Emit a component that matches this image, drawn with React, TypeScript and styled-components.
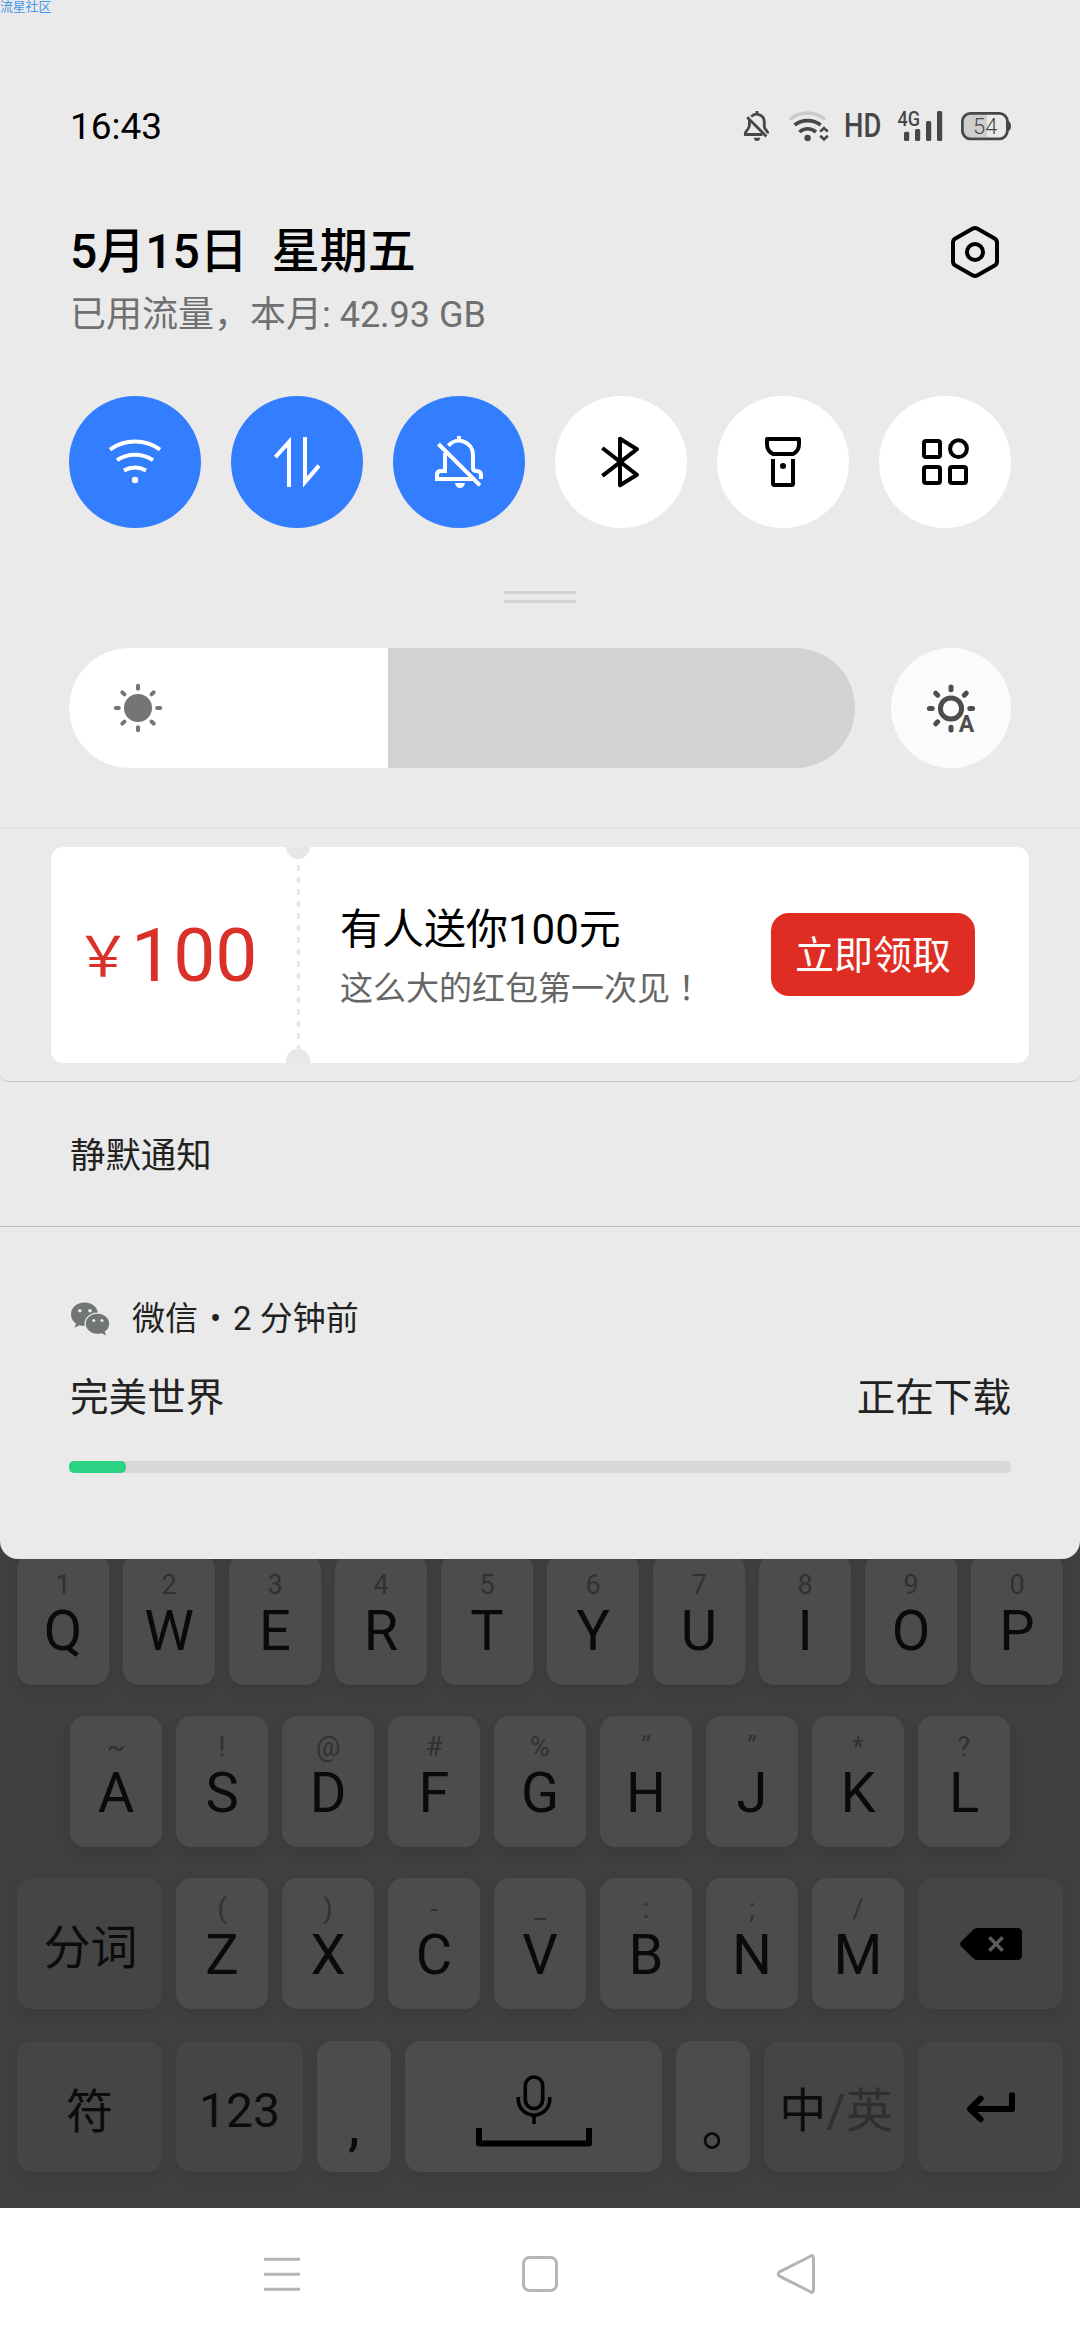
import React from "react";
import styled, { createGlobalStyle } from "styled-components";

const GlobalStyle = createGlobalStyle`
  html, body { margin: 0; padding: 0; background: #3f3f3d; }
  * { box-sizing: border-box; }
  svg { display: block; flex: none; overflow: visible; }
`;

const Screen = styled.main`
  width: 1080px;
  height: 2340px;
  display: flex;
  flex-direction: column;
  background: #3f3f3d;
  overflow: hidden;
  position: relative;
  font-family: Roboto, "Noto Sans CJK SC", sans-serif;
  color: #000;
  white-space: pre;
`;

const Watermark = styled.span`
  position: absolute;
  z-index: 2;
  left: 0;
  top: 0;
  font-size: 12.8px;
  line-height: 13px;
  color: #4698e8;
`;

const Shade = styled.section`
  position: relative;
  z-index: 1;
  height: 1559px;
  flex: none;
  background: #eaeaea;
  border-radius: 0 0 18px 18px;
  display: flex;
  flex-direction: column;
`;

const StatusBar = styled.header`
  margin-top: 96px;
  height: 60px;
  padding: 0 69px 0 70px;
  display: flex;
  align-items: center;
  justify-content: space-between;
`;

const Clock = styled.time`
  padding-top: 1px;
  font-size: 37px;
  line-height: 60px;
`;

const StatusIcons = styled.div`
  display: flex;
  align-items: center;
  color: #474747;
`;

const HdLabel = styled.span`
  width: 36px;
  margin: 0 18px 0 15px;
  font-size: 33px;
  font-weight: 500;
  line-height: 60px;
  transform: scaleX(0.83);
  transform-origin: 0 50%;
`;

const Header = styled.div`
  margin-top: 66px;
  padding: 0 75px 0 70px;
  display: flex;
  justify-content: space-between;
  align-items: flex-start;
`;

const DateText = styled.div`
  font-size: 48px;
  line-height: 60px;
  font-weight: 500;
`;

const DataUsage = styled.div`
  margin-top: 9px;
  font-size: 36px;
  line-height: 48px;
  color: #707070;
`;

const Tiles = styled.div`
  margin: 57px 69px 0;
  display: flex;
  gap: 30px;
`;

const Tile = styled.div<{ $on?: boolean }>`
  width: 132px;
  height: 132px;
  border-radius: 50%;
  display: grid;
  place-items: center;
  background: ${(p) => (p.$on ? "#337dff" : "#fff")};
  color: ${(p) => (p.$on ? "#fff" : "#000")};
`;

const DragHandle = styled.div`
  width: 72px;
  height: 12px;
  margin: 63px auto 0 504px;
  border-top: 3px solid #d3d3d3;
  border-bottom: 3px solid #d3d3d3;
`;

const BrightnessRow = styled.div`
  margin: 45px 69px 0;
  display: flex;
  justify-content: space-between;
`;

const BrightnessTrack = styled.div`
  width: 786px;
  height: 120px;
  border-radius: 60px;
  overflow: hidden;
  background: #d2d2d2;
`;

const BrightnessLevel = styled.div`
  width: 319px;
  height: 120px;
  padding-left: 39px;
  display: flex;
  align-items: center;
  background: #fff;
  color: #757575;
`;

const AutoBrightness = styled.div`
  width: 120px;
  height: 120px;
  border-radius: 50%;
  display: grid;
  place-items: center;
  background: #fbfbfb;
  color: #4d4d4d;
`;

const Promo = styled.section`
  margin-top: 59px;
  padding: 18px 51px;
  border-top: 2px solid #e1e1e1;
`;

const PromoEdge = styled.div`
  height: 12px;
  margin-top: -11px;
  border-bottom: 1px solid #c2c2c2;
  border-radius: 0 0 8px 8px;
`;

const Coupon = styled.div`
  height: 216px;
  border-radius: 12px;
  overflow: hidden;
  background: #fff;
  display: flex;
  align-items: center;
`;

const Amount = styled.div`
  width: 235px;
  padding: 7px 0 0 24px;
  display: flex;
  align-items: baseline;
  color: #d93028;
  font-size: 75px;
  line-height: 90px;
`;

const Currency = styled.span`
  position: relative;
  top: -5px;
  font-size: 56px;
  line-height: 90px;
`;

const Perforation = styled.div`
  width: 24px;
  height: 216px;
  display: flex;
  flex-direction: column;
  justify-content: space-between;
  align-items: center;
`;

const Notch = styled.i<{ $bottom?: boolean }>`
  width: 24px;
  height: ${(p) => (p.$bottom ? 14 : 12)}px;
  background: #e7e7e7;
  border-radius: ${(p) => (p.$bottom ? "12px 12px 0 0" : "0 0 12px 12px")};
`;

const Dashes = styled.i`
  width: 3px;
  flex: 1;
  margin-top: 6px;
  background: repeating-linear-gradient(#e6e6e6 0 6px, transparent 6px 12px);
`;

const CouponText = styled.div`
  flex: 1;
  padding: 5px 0 0 30px;
`;

const CouponTitle = styled.div`
  font-size: 42px;
  line-height: 60px;
`;

const CouponNote = styled.div`
  font-size: 33px;
  line-height: 52px;
  color: #666;
`;

const CenteredMark = styled.span`
  font-family: "Noto Sans CJK JP", sans-serif;
`;

const ClaimButton = styled.button`
  width: 204px;
  height: 83px;
  margin: -1px 54px 0 0;
  padding: 3px 0 0;
  border: 0;
  border-radius: 18px;
  background: #e02d24;
  color: #fff;
  font: inherit;
  font-size: 39px;
  line-height: 80px;
`;

const SilentHeading = styled.h2`
  margin: 0;
  height: 145px;
  padding: 5px 0 0 70px;
  border-bottom: 1px solid #bdbdbd;
  font-size: 35.4px;
  font-weight: 400;
  line-height: 139px;
  color: #222;
`;

const Notification = styled.article`
  padding: 70px 69px 0;
  color: #222;
`;

const AppLine = styled.div`
  height: 44px;
  padding-left: 1px;
  display: flex;
  align-items: center;
  font-size: 33px;
  line-height: 44px;
`;

const AppName = styled.span`
  margin-left: 22px;
`;

const Bullet = styled.span`
  width: 35px;
  text-align: center;
`;

const DownloadLine = styled.div`
  margin-top: 29px;
  padding: 0 0 0 1px;
  display: flex;
  justify-content: space-between;
  font-size: 38.6px;
  line-height: 56px;
`;

const ProgressTrack = styled.div`
  margin-top: 35px;
  height: 12px;
  border-radius: 5px;
  background: #d8d8d8;
`;

const ProgressBar = styled.div`
  width: 57px;
  height: 12px;
  border-radius: 5px;
  background: #2bd283;
`;

const Keyboard = styled.section`
  margin-top: -20px;
  height: 669px;
  flex: none;
  padding-top: 15px;
  display: flex;
  flex-direction: column;
  gap: 31px;
`;

const KeyRow = styled.div<{ $inset?: number; $nudge?: number }>`
  display: flex;
  gap: 14px;
  margin-top: ${(p) => p.$nudge ?? 0}px;
  padding: 0 ${(p) => p.$inset ?? 17}px;
`;

const Key = styled.div<{ $w?: number; $fn?: boolean }>`
  width: ${(p) => p.$w ?? 92}px;
  height: 131px;
  flex: none;
  border-radius: 15px;
  background: ${(p) => (p.$fn ? "#454545" : "#4c4c4c")};
  box-shadow: 0 6px 8px rgba(45, 45, 55, 0.2);
  display: flex;
  flex-direction: column;
  align-items: center;
`;

const Hint = styled.span`
  margin-top: 16px;
  font-size: 27px;
  line-height: 30px;
  color: #313131;
`;

const Letter = styled.span`
  margin-top: 1px;
  font-size: 56px;
  line-height: 60px;
  color: #0a0a0a;
`;

const FnLabel = styled.span<{ $size?: number; $top?: number; $left?: number }>`
  font-size: ${(p) => p.$size ?? 47}px;
  line-height: 131px;
  padding-top: ${(p) => p.$top ?? 4}px;
  padding-left: ${(p) => p.$left ?? 0}px;
  height: 131px;
  color: #0c0c0c;
`;

const Faded = styled.span`
  color: #2f2f2f;
`;

const FullStop = styled.span`
  padding-left: 31px;
  font-family: "Noto Sans CJK SC", sans-serif;
  font-size: 54px;
  line-height: 60px;
  margin-top: 52px;
  color: #0a0a0a;
`;

const Comma = styled.span`
  font-size: 60px;
  line-height: 60px;
  margin-top: 53px;
  color: #0a0a0a;
`;

const NavBar = styled.nav`
  height: 132px;
  flex: none;
  padding: 0 236px;
  display: flex;
  align-items: center;
  justify-content: space-between;
  background: #fff;
  color: #b5b5b5;
`;

const Glyph = ({ size = 66, w = 4, children }: { size?: number; w?: number; children: React.ReactNode }) => (
  <svg
    width={size}
    height={size}
    viewBox={`${-size / 2} ${-size / 2} ${size} ${size}`}
    fill="none"
    stroke="currentColor"
    strokeWidth={w}
  >
    {children}
  </svg>
);

const StatusMuteIcon = () => (
  <svg width="26" height="30" viewBox="0 0 26 30" fill="none" stroke="currentColor" strokeWidth="2.8">
    <path d="M13 0V3M7.2 5.6A7.6 7.6 0 0 1 20.3 10.5V15.5Q20.3 17.6 22.6 19.8Q23.8 21 23.8 22.6" />
    <path d="M5.4 8.8V14.5Q5.2 17 3 19.2Q1.3 20.8 1.3 23.5H18.5" />
    <path d="M3.2 6.2L22.4 25.4" />
    <path d="M9.7 26.8H16.3Q15.6 30 13 30Q10.4 30 9.7 26.8Z" fill="currentColor" stroke="none" />
  </svg>
);

const StatusWifiIcon = () => (
  <svg width="40" height="30" viewBox="0 0 40 30" fill="none" stroke="currentColor" strokeWidth="3.6">
    <path d="M1 8.5Q8.5 2 18.5 2T36 8.5" stroke="#cbcbcb" />
    <path d="M5.6 14Q11 9.6 18.6 9.6T31.6 14" />
    <path d="M10.4 21Q14 17.8 18.6 17.8T27 21" />
    <circle cx="18.6" cy="27" r="3.2" fill="currentColor" stroke="none" />
    <path d="M31.2 20.6L35 17L38.8 20.6M31.2 24.8L35 28.4L38.8 24.8" strokeWidth="2.6" />
  </svg>
);

const SignalIcon = () => (
  <svg width="45" height="30" viewBox="0 0 45 30" fill="currentColor">
    <text x="-0.5" y="15" fontSize="20" fontWeight="500" fontFamily="Roboto, sans-serif" textLength="22.5" lengthAdjust="spacingAndGlyphs">4G</text>
    <rect x="6" y="20.7" width="5.2" height="9.3" rx="1.5" />
    <rect x="17" y="18" width="5.2" height="12" rx="1.5" />
    <rect x="28" y="10" width="5.2" height="20" rx="1.5" />
    <rect x="39" y="0" width="5.2" height="30" rx="1.5" />
  </svg>
);

const BatteryBox = styled.div`
  margin-left: 18px;
`;

const BatteryIcon = () => (
  <svg width="50" height="30" viewBox="0 0 50 30">
    <path d="M9 3H26V26H9Q3 26 3 20V9Q3 3 9 3Z" fill="#cecece" />
    <rect x="1.4" y="2.4" width="45" height="25.4" rx="8" fill="none" stroke="currentColor" strokeWidth="2.8" />
    <path d="M47 9.5Q50 11 50 15T47 20.5Z" fill="currentColor" />
    <text x="24.2" y="22.6" fontSize="22" fontWeight="300" textAnchor="middle" fill="currentColor" fontFamily="Roboto, sans-serif">54</text>
  </svg>
);

const SettingsIcon = () => (
  <Glyph size={60}>
    <path d="M-2.6 -23.2Q0 -24.6 2.6 -23.2L19.6 -13.6Q22 -12.2 22 -9.4V9.4Q22 12.2 19.6 13.6L2.6 23.2Q0 24.6 -2.6 23.2L-19.6 13.6Q-22 12.2 -22 9.4V-9.4Q-22 -12.2 -19.6 -13.6Z" />
    <circle r="8" />
  </Glyph>
);

const WifiIcon = () => (
  <Glyph>
    <path d="M-25 -12.4A43 43 0 0 1 25 -12.4M-18 -1.8A32.7 32.7 0 0 1 18 -1.8M-11 8.6A23 23 0 0 1 11 8.6" />
    <circle cy="18" r="3.2" fill="currentColor" stroke="none" />
  </Glyph>
);

const DataIcon = () => (
  <Glyph>
    <path d="M-8 25V-20L-21.6 -4.8M8 -25V20L22 3.6" strokeMiterlimit="10" />
  </Glyph>
);

const MuteIcon = () => (
  <Glyph>
    <path d="M0 -26V-21M-10.6 -16.4A14 14 0 0 1 14 -7.5V5.5Q14 9 17.5 9Q22 9 22 13V17" />
    <path d="M-14 -9V9H-18.4Q-22 9 -22 12.6V17H15" />
    <path d="M-20.6 -18L21 23.4" />
    <path d="M-4 21H6Q5 26 1 26T-4 21Z" fill="currentColor" stroke="none" />
  </Glyph>
);

const BluetoothIcon = () => (
  <Glyph>
    <path d="M-18.6 -14L16 12.8L-1 23.3V-23.3L16 -12.8L-18.6 13.8" strokeLinejoin="round" />
  </Glyph>
);

const TorchIcon = () => (
  <Glyph>
    <path d="M-16 -23H16V-18Q16 -11 10 -8H-10Q-16 -11 -16 -18Z" strokeLinejoin="round" />
    <path d="M-10 -3V21.5Q-10 23 -8.5 23H8.5Q10 23 10 21.5V-3" />
    <circle cy="4" r="3" fill="currentColor" stroke="none" />
  </Glyph>
);

const MoreIcon = () => (
  <Glyph>
    <rect x="-21" y="-21" width="16" height="16" rx="2" />
    <circle cx="13.5" cy="-13.3" r="8.4" />
    <rect x="-21" y="5" width="16" height="16" rx="2" />
    <rect x="5" y="5" width="16" height="16" rx="2" />
  </Glyph>
);

const rays = [0, 45, 90, 135, 180, 225, 270, 315];

const SunIcon = () => (
  <Glyph size={60}>
    <circle r="14" fill="currentColor" stroke="none" />
    {rays.map((a) => (
      <path key={a} d="M0 -19.2V-22.2" strokeLinecap="round" transform={`rotate(${a})`} />
    ))}
  </Glyph>
);

const AutoSunIcon = () => (
  <Glyph size={60}>
    <circle cy="0.5" r="10.6" strokeWidth="5" />
    {rays
      .filter((a) => a !== 135)
      .map((a) => (
        <path key={a} d="M0 -18.8V-21.6" strokeLinecap="round" strokeWidth="5" transform={`translate(0 .5) rotate(${a})`} />
      ))}
    <text x="7.8" y="24" fontSize="23" fontWeight="700" fill="currentColor" stroke="#fbfbfb" strokeWidth="3" paintOrder="stroke" fontFamily="Roboto, sans-serif">
      A
    </text>
  </Glyph>
);

const WechatIcon = () => (
  <svg width="40" height="34" viewBox="0 0 40 34">
    <path d="M14.5 0.5C6.6 0.5 1 5.8 1 12.4c0 3.8 1.9 6.9 5 9.1L4.7 25.8l4.9-2.6c1.6.5 3.2.8 4.9.8 8 0 13.5-5 13.5-11.7S22.5.5 14.5.5Z" fill="#727576" />
    <ellipse cx="27.5" cy="21.8" rx="13" ry="11.4" fill="#eaeaea" />
    <path d="M27.5 11.8c-6.8 0-11.7 4.5-11.7 10s4.9 10 11.7 10c1.5 0 2.9-.2 4.2-.6l4.3 2.3-1.2-3.9c2.7-1.9 4.4-4.6 4.4-7.8 0-5.500-4.900-10-11.700-10Z" fill="#727576" />
    <g fill="#eaeaea">
      <circle cx="9.8" cy="8.8" r="1.8" />
      <circle cx="20" cy="8.8" r="1.8" />
      <circle cx="23.8" cy="18.4" r="1.5" />
      <circle cx="32" cy="18.4" r="1.5" />
    </g>
  </svg>
);

const KeyIcon = styled.div<{ $down?: number }>`
  height: 131px;
  padding-top: ${(p) => (p.$down ?? 0) * 2}px;
  display: flex;
  align-items: center;
  color: #000;
`;

const BackspaceIcon = () => (
  <svg width="62" height="32" viewBox="0 0 62 32">
    <path d="M13.5 1.6Q15.2 0 17.6 0H57Q62 0 62 5V27Q62 32 57 32H17.6Q15.2 32 13.5 30.4L1 18.2Q-1 16 1 13.8Z" fill="#000" />
    <path d="M29.3 9.3L42.7 22.7M42.7 9.3L29.3 22.7" stroke="#5c5c5c" strokeWidth="3.4" />
  </svg>
);

const EnterIcon = () => (
  <svg width="48" height="30" viewBox="0 0 48 30" fill="none" stroke="currentColor" strokeWidth="6" strokeLinejoin="round">
    <path d="M45 1V16H5" />
    <path d="M43.5 1H46.500" strokeWidth="3" strokeLinecap="round" />
    <path d="M13.600 5.600L3 16L13.600 26.200" strokeLinecap="round" />
  </svg>
);

const SpaceIcon = () => (
  <svg width="116" height="72" viewBox="0 0 116 72" fill="none" stroke="currentColor" strokeWidth="3.6">
    <rect x="49.3" y="2" width="17.4" height="31.5" rx="8.7" />
    <path d="M42.3 22V24.5A15.7 15.7 0 0 0 73.7 24.5V22M58 40V49" />
    <path d="M3 53V68.5H113V53" strokeWidth="6" strokeLinejoin="round" />
  </svg>
);

const topRow = ["1Q", "2W", "3E", "4R", "5T", "6Y", "7U", "8I", "9O", "0P"];
const homeRow = ["~A", "!S", "@D", "#F", "%G", "“H", "”J", "*K", "?L"];
const lowRow = ["(Z", ")X", "-C", "_V", ":B", ";N", "/M"];

const LetterKey = ({ pair }: { pair: string }) => (
  <Key>
    <Hint>{pair[0]}</Hint>
    <Letter>{pair[1]}</Letter>
  </Key>
);

export default function App() {
  return (
    <Screen>
      <GlobalStyle />
      <Watermark>流星社区</Watermark>
      <Shade>
        <StatusBar>
          <Clock>16:43</Clock>
          <StatusIcons>
            <StatusMuteIcon />
            <svg width="19" height="1" />
            <StatusWifiIcon />
            <HdLabel>HD</HdLabel>
            <SignalIcon />
            <BatteryBox>
              <BatteryIcon />
            </BatteryBox>
          </StatusIcons>
        </StatusBar>
        <Header>
          <div>
            <DateText>5月15日{"  "}星期五</DateText>
            <DataUsage>已用流量，本月: 42.93 GB</DataUsage>
          </div>
          <SettingsIcon />
        </Header>
        <Tiles>
          <Tile $on><WifiIcon /></Tile>
          <Tile $on><DataIcon /></Tile>
          <Tile $on><MuteIcon /></Tile>
          <Tile><BluetoothIcon /></Tile>
          <Tile><TorchIcon /></Tile>
          <Tile><MoreIcon /></Tile>
        </Tiles>
        <DragHandle />
        <BrightnessRow>
          <BrightnessTrack>
            <BrightnessLevel>
              <SunIcon />
            </BrightnessLevel>
          </BrightnessTrack>
          <AutoBrightness>
            <AutoSunIcon />
          </AutoBrightness>
        </BrightnessRow>
        <Promo>
          <Coupon>
            <Amount>
              <Currency>￥</Currency>100
            </Amount>
            <Perforation>
              <Notch />
              <Dashes />
              <Notch $bottom />
            </Perforation>
            <CouponText>
              <CouponTitle>有人送你100元</CouponTitle>
              <CouponNote>
                这么大的红包第一次见<CenteredMark lang="ja">！</CenteredMark>
              </CouponNote>
            </CouponText>
            <ClaimButton>立即领取</ClaimButton>
          </Coupon>
        </Promo>
        <PromoEdge />
        <SilentHeading>静默通知</SilentHeading>
        <Notification>
          <AppLine>
            <WechatIcon />
            <AppName>微信</AppName>
            <Bullet>•</Bullet>
            <span>2 分钟前</span>
          </AppLine>
          <DownloadLine>
            <span>完美世界</span>
            <span>正在下载</span>
          </DownloadLine>
          <ProgressTrack>
            <ProgressBar />
          </ProgressTrack>
        </Notification>
      </Shade>
      <Keyboard>
        <KeyRow>
          {topRow.map((k) => <LetterKey key={k} pair={k} />)}
        </KeyRow>
        <KeyRow $inset={70}>
          {homeRow.map((k) => <LetterKey key={k} pair={k} />)}
        </KeyRow>
        <KeyRow>
          <Key $w={145} $fn><FnLabel $left={2}>分词</FnLabel></Key>
          {lowRow.map((k) => <LetterKey key={k} pair={k} />)}
          <Key $w={145} $fn><KeyIcon><BackspaceIcon /></KeyIcon></Key>
        </KeyRow>
        <KeyRow $nudge={1}>
          <Key $w={145} $fn><FnLabel $top={5}>符</FnLabel></Key>
          <Key $w={127} $fn><FnLabel $size={48} $top={4}>123</FnLabel></Key>
          <Key $w={74}><Comma>,</Comma></Key>
          <Key $w={257}><KeyIcon $down={4}><SpaceIcon /></KeyIcon></Key>
          <Key $w={74}><FullStop>。</FullStop></Key>
          <Key $w={140} $fn><FnLabel $left={4}>中<Faded>/英</Faded></FnLabel></Key>
          <Key $w={145} $fn><KeyIcon $down={1}><EnterIcon /></KeyIcon></Key>
        </KeyRow>
      </Keyboard>
      <NavBar>
        <Glyph size={92} w={3}>
          <path d="M-18 -14.7H18M-18 0.3H18M-18 15.3H18" />
        </Glyph>
        <Glyph size={92} w={3}>
          <rect x="-16.5" y="-16.5" width="33" height="33" rx="6" />
        </Glyph>
        <Glyph size={92} w={3}>
          <path d="M12 -17.5Q15.5 -20 15.5 -15.5V15.5Q15.5 20 12 17.5L-18.5 2.2Q-21 0 -18.5 -2.2Z" />
        </Glyph>
      </NavBar>
    </Screen>
  );
}
